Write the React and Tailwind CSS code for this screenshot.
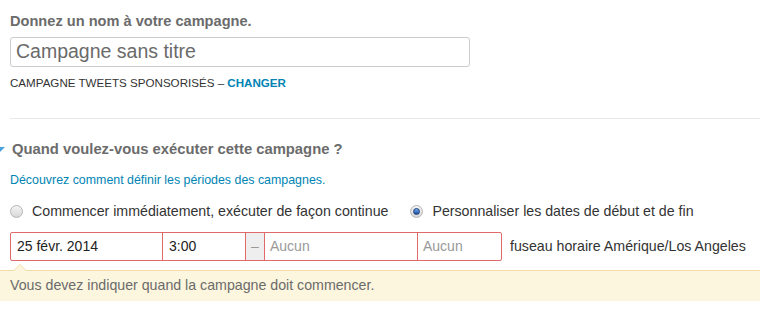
import React from 'react';

const Radio = ({ checked }) => (
  <span className="relative inline-flex h-[13px] w-[13px] shrink-0 items-center justify-center rounded-full border border-[#b5b5b5] bg-gradient-to-b from-[#f4f4f4] to-[#d8d8d8]">
    {checked && (
      <span className="h-[7px] w-[7px] rounded-full border border-[#1c3f7a] bg-gradient-to-b from-[#6fa8e8] to-[#1b4fa0]" />
    )}
  </span>
);

export default function App() {
  return (
    <div className="h-[314px] w-[760px] overflow-hidden bg-white font-['Liberation_Sans',Arial,sans-serif]">
      <div className="pl-[10px] pt-[13px]">
        <div className="text-[14.6px] font-bold leading-[16px] text-[#6b6b6b]">Donnez un nom à votre campagne.</div>
        <div className="mt-[8px] flex h-[30px] w-[460px] items-center rounded-[3px] border border-[#cccccc] px-[5px] text-[19.5px] text-[#6a6a6a]">
          Campagne sans titre
        </div>
        <div className="mt-[9px] text-[11.6px] leading-[14px] text-[#333]">
          CAMPAGNE TWEETS SPONSORISÉS – <span className="font-bold text-[#0084b4]">CHANGER</span>
        </div>
        <div className="mt-[28px] border-t border-[#e8e8e8]" />
      </div>

      <div className="relative mt-[22px] flex items-center pl-[12px]">
        <svg className="absolute left-0 top-[6px]" width="5" height="5" viewBox="0 0 5 5">
          <polygon points="0,0 5,0 0,5" fill="#4aa3df" />
        </svg>
        <div className="text-[14.8px] font-bold leading-[17px] text-[#6b6b6b]">Quand voulez-vous exécuter cette campagne ?</div>
      </div>

      <div className="mt-[15px] pl-[10px] text-[12.4px] leading-[14px] text-[#0084b4]">
        Découvrez comment définir les périodes des campagnes.
      </div>

      <div className="mt-[16px] flex items-center pl-[10px] text-[14.2px] leading-[17px] text-[#333]">
        <div className="flex items-center gap-[9px]">
          <Radio />
          <span>Commencer immédiatement, exécuter de façon continue</span>
        </div>
        <div className="ml-[22px] flex items-center gap-[9px]">
          <Radio checked />
          <span>Personnaliser les dates de début et de fin</span>
        </div>
      </div>

      <div className="mt-[12px] flex items-center pl-[10px]">
        <div className="flex h-[29px] rounded-[2px] border border-[#e06a6a] text-[14px]">
          <div className="flex w-[152px] items-center border-r border-[#e06a6a] px-[6px] text-[#222]">25 févr. 2014</div>
          <div className="flex w-[83px] items-center border-r border-[#e06a6a] px-[6px] text-[#222]">3:00</div>
          <div className="flex w-[19px] items-center justify-center border-r border-[#e06a6a] bg-[#eeeeee] text-[#999]">–</div>
          <div className="flex w-[153px] items-center border-r border-[#e06a6a] px-[5px] text-[#999]">Aucun</div>
          <div className="flex w-[83px] items-center px-[5px] text-[#999]">Aucun</div>
        </div>
        <div className="ml-[8px] text-[14.2px] text-[#333]">fuseau horaire Amérique/Los Angeles</div>
      </div>

      <div className="relative mt-[9px] h-[31px] border-t border-[#f3dca6] bg-[#fdf6de] pl-[10px] text-[14.2px] leading-[29px] text-[#6b6b6b]">
        <span className="absolute -top-[7px] left-[13px] h-0 w-0 border-x-[7px] border-b-[7px] border-x-transparent border-b-[#f3dca6]" />
        <span className="absolute -top-[6px] left-[14px] h-0 w-0 border-x-[6px] border-b-[6px] border-x-transparent border-b-[#fdf6de]" />
        Vous devez indiquer quand la campagne doit commencer.
      </div>
    </div>
  );
}
